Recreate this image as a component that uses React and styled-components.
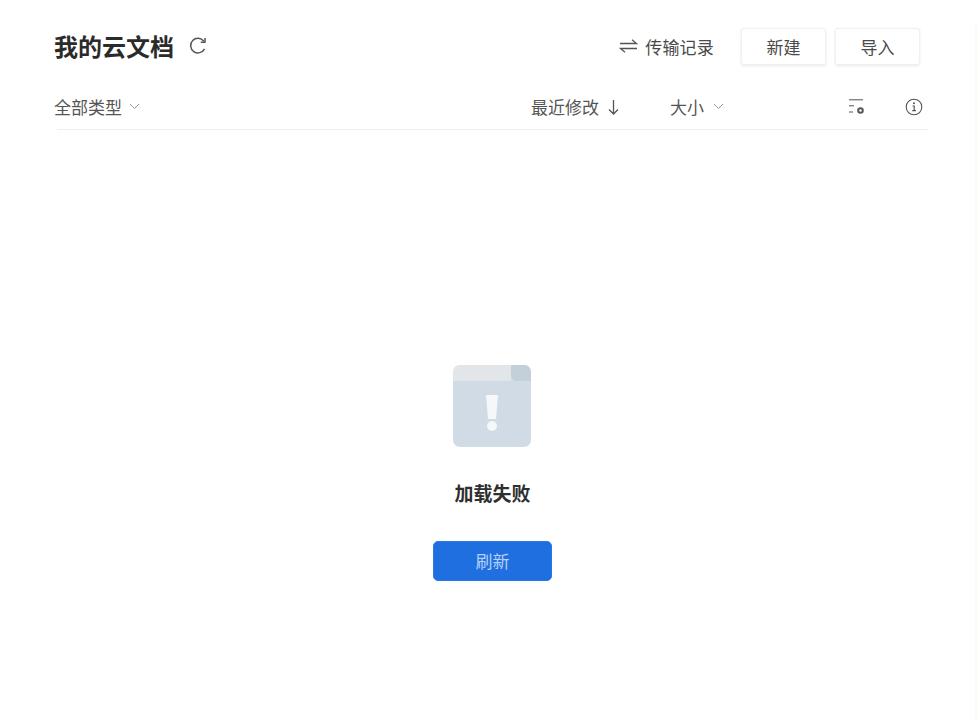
import React from "react";
import styled, { createGlobalStyle } from "styled-components";

const Global = createGlobalStyle`
  html, body { margin: 0; padding: 0; background: #fff; }
  body { font-family: "Noto Sans CJK SC", "Noto Sans", sans-serif; color: #333; }
  * { box-sizing: border-box; }
`;

const Page = styled.div`
  width: 977px; height: 720px; display: flex; overflow: hidden; background: #fff;
`;
const Main = styled.main`
  flex: 1; min-width: 0; display: flex; flex-direction: column;
`;
const EdgeStrip = styled.div`
  width: 2px; margin-top: 24px; background: #fbfcee;
`;
const HeaderRow = styled.header`
  height: 37px; margin: 28px 0 0 54px; padding-right: 55px;
  display: flex; align-items: center; justify-content: space-between;
`;
const TitleGroup = styled.div`
  display: flex; align-items: center; gap: 14px; margin-top: -1px;
`;
const Title = styled.h1`
  margin: 0; font-size: 24px; line-height: 34px; font-weight: 700; color: #2b2b2b;
`;
const Actions = styled.div`
  display: flex; align-items: center;
`;
const TransferLink = styled.div`
  display: flex; align-items: center; gap: 7px; margin-right: 27px;
  font-size: 17px; color: #4a4a4a; letter-spacing: .2px;
`;
const Btn = styled.button`
  width: 85px; height: 37px; margin-left: ${p => p.$gap || 0}px; padding: 0;
  border: 1px solid #f0f0f0; border-radius: 3px; background: #fff;
  box-shadow: 0 1px 3px rgba(0,0,0,.09);
  font: 400 17px "Noto Sans CJK SC", sans-serif; color: #4a4a4a;
`;
const FilterRow = styled.div`
  height: 41px; margin: 22px 52px 0 54px; padding-bottom: 2px;
  display: flex; align-items: center; font-size: 17px; color: #555;
`;
const Filter = styled.div`
  display: flex; align-items: center; gap: ${p => p.$gap ?? 7}px;
  width: ${p => p.$width ? p.$width + "px" : "auto"};
`;
const Spacer = styled.div` flex: 1; `;
const IconSlot = styled.div`
  display: flex; margin-left: ${p => p.$left || 0}px;
`;
const Divider = styled.hr`
  width: 871px; height: 1px; margin: 1px 0 0 57px; border: 0; background: #f0f0f0;
`;
const EmptyState = styled.section`
  width: 119px; margin: 235px 0 0 433px;
  display: flex; flex-direction: column; align-items: center;
`;
const Message = styled.p`
  margin: 31px 0 0; font-size: 19px; line-height: 30px; font-weight: 700; color: #2f2f2f; white-space: nowrap;
`;
const RefreshBtn = styled.button`
  width: 119px; height: 40px; margin-top: 33px; padding: 0 0 2px;
  border: 1px solid #2a78e4; border-radius: 5px; background: #1f6fe0;
  font: 400 17px "Noto Sans CJK SC", sans-serif; color: #b5d2f7;
`;
const ErrorIconWrap = styled.div` display: flex; margin-left: -1px; `;

const Chevron = () => (
  <svg width="11" height="7" viewBox="0 0 11 7" fill="none" stroke="#9a9a9a" strokeWidth="1"><path d="M1 1l4.500 4.500L10 1" /></svg>
);
const Reload = () => (
  <svg width="20" height="20" viewBox="0 0 20 20" fill="none" stroke="#555" strokeWidth="1.500"><path d="M16.500 12.800A7.300 7.300 0 1 1 15.800 5.200" /><path d="M17 2v4.200h-4.200" /></svg>
);
const Transfer = () => (
  <svg width="19" height="16" viewBox="0 0 19 16" fill="none" stroke="#555" strokeWidth="1.300"><path d="M1 4.500h16.500L13 .8" /><path d="M18 9.500H1.500L6 13.200" /></svg>
);
const DownArrow = () => (
  <svg width="11" height="16" viewBox="0 0 11 16" fill="none" stroke="#555" strokeWidth="1.300"><path d="M5.500 1v14M1 10.500L5.500 15 10 10.500" /></svg>
);
const ListSettings = () => (
  <svg width="16" height="16" viewBox="0 0 16 16" fill="none" stroke="#555"><path d="M0 .8h14M0 6.800h5M0 13h4" strokeWidth="1" /><circle cx="11.500" cy="11.500" r="2.300" strokeWidth="2" /></svg>
);
const Info = () => (
  <svg width="18" height="18" viewBox="0 0 18 18" fill="none" stroke="#555"><circle cx="9" cy="9" r="7.800" strokeWidth="1.100" /><path d="M7.500 8h1.700v4.500M7.200 12.700h3.800" strokeWidth="1.200" /><circle cx="9" cy="5.300" r="1" fill="#555" stroke="none" /></svg>
);
const ErrorIcon = () => (
  <svg width="78" height="82" viewBox="0 0 78 82">
    <rect width="78" height="82" rx="7" fill="#d0dbe5" />
    <path d="M7 0h51v16H0V7a7 7 0 0 1 7-7z" fill="#e3e6e9" />
    <path d="M58 0h13a7 7 0 0 1 7 7v9H64a6 6 0 0 1-6-6z" fill="#c3d0da" />
    <path d="M33 30h12l-2 24h-8z" fill="#f5f7f8" />
    <circle cx="39" cy="61" r="5" fill="#f5f7f8" />
  </svg>
);

export default function App() {
  return (
    <Page>
      <Global />
      <Main>
        <HeaderRow>
          <TitleGroup><Title>我的云文档</Title><Reload /></TitleGroup>
          <Actions>
            <TransferLink><Transfer />传输记录</TransferLink>
            <Btn>新建</Btn>
            <Btn $gap={9}>导入</Btn>
          </Actions>
        </HeaderRow>
        <FilterRow>
          <Filter>全部类型<Chevron /></Filter>
          <Spacer />
          <Filter $gap={9} $width={139}>最近修改<DownArrow /></Filter>
          <Filter $gap={9} $width={179}>大小<Chevron /></Filter>
          <IconSlot><ListSettings /></IconSlot>
          <IconSlot $left={40}><Info /></IconSlot>
        </FilterRow>
        <Divider />
        <EmptyState>
          <ErrorIconWrap><ErrorIcon /></ErrorIconWrap>
          <Message>加载失败</Message>
          <RefreshBtn>刷新</RefreshBtn>
        </EmptyState>
      </Main>
      <EdgeStrip />
    </Page>
  );
}
